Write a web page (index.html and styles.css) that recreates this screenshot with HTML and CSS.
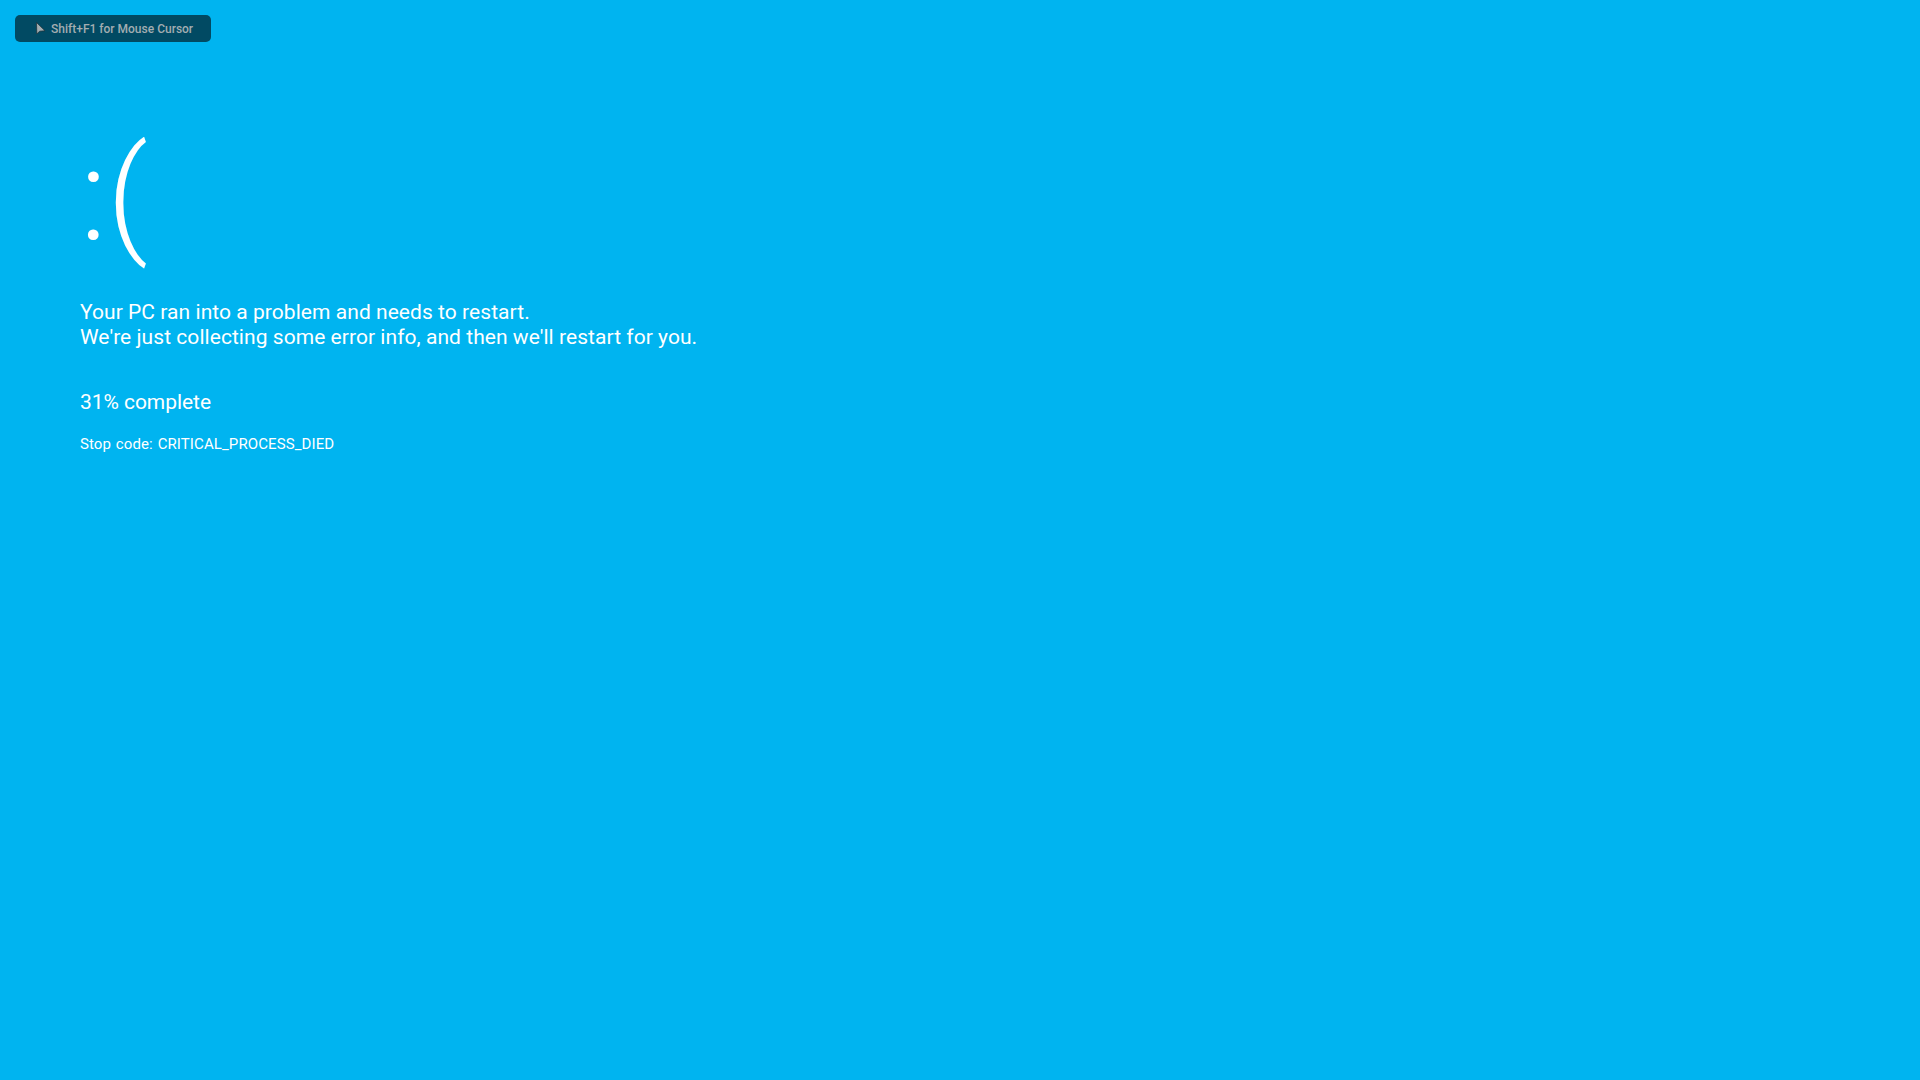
FILE: index.html
```html
<!DOCTYPE html>
<html lang="en">
<head>
<meta charset="utf-8">
<title>Blue screen</title>
<link rel="stylesheet" href="styles.css">
</head>
<body>
<div class="hint">
  <svg class="cursor" width="11" height="13" viewBox="0 0 11 13"><path d="M1.5 0.5 L1.8 12 L4.6 9.2 L10 8.8 Z" fill="#a3adb1" stroke="#1d2d33" stroke-width="0.7"/></svg>
  <span>Shift+F1 for Mouse Cursor</span>
</div>
<main class="screen">
  <div class="face">:(</div>
  <p class="message">Your PC ran into a problem and needs to restart.<br>We're just collecting some error info, and then we'll restart for you.</p>
  <p class="progress">31% complete</p>
  <p class="stop">Stop code: CRITICAL_PROCESS_DIED</p>
</main>
</body>
</html>
```
FILE: styles.css
```css
* { box-sizing: border-box; }
html, body { margin: 0; height: 100%; }
body {
  background: #00b4f0;
  color: #fff;
  font-family: Roboto, "Liberation Sans", sans-serif;
  overflow: hidden;
  padding: 15px 0 0 15px;
}
.hint {
  width: 196px;
  height: 27px;
  background: #014a63;
  border-radius: 5px;
  color: #a3adb1;
  font-size: 12px;
  font-weight: 500;
  display: flex;
  align-items: center;
  gap: 5px;
  padding-left: 20px;
}
.screen { padding: 78px 0 0 65px; }
.face {
  font-size: 128px;
  font-weight: 300;
  line-height: 150px;
  height: 150px;
}
.message {
  margin: 30px 0 0;
  font-size: 21px;
  letter-spacing: 0.05px;
  line-height: 25px;
}
.progress {
  margin: 40px 0 0;
  font-size: 21px;
  letter-spacing: -0.05px;
  line-height: 25px;
}
.stop {
  margin: 19px 0 0;
  font-size: 15px;
  letter-spacing: 0.1px;
  word-spacing: 1px;
  line-height: 20px;
}
```
